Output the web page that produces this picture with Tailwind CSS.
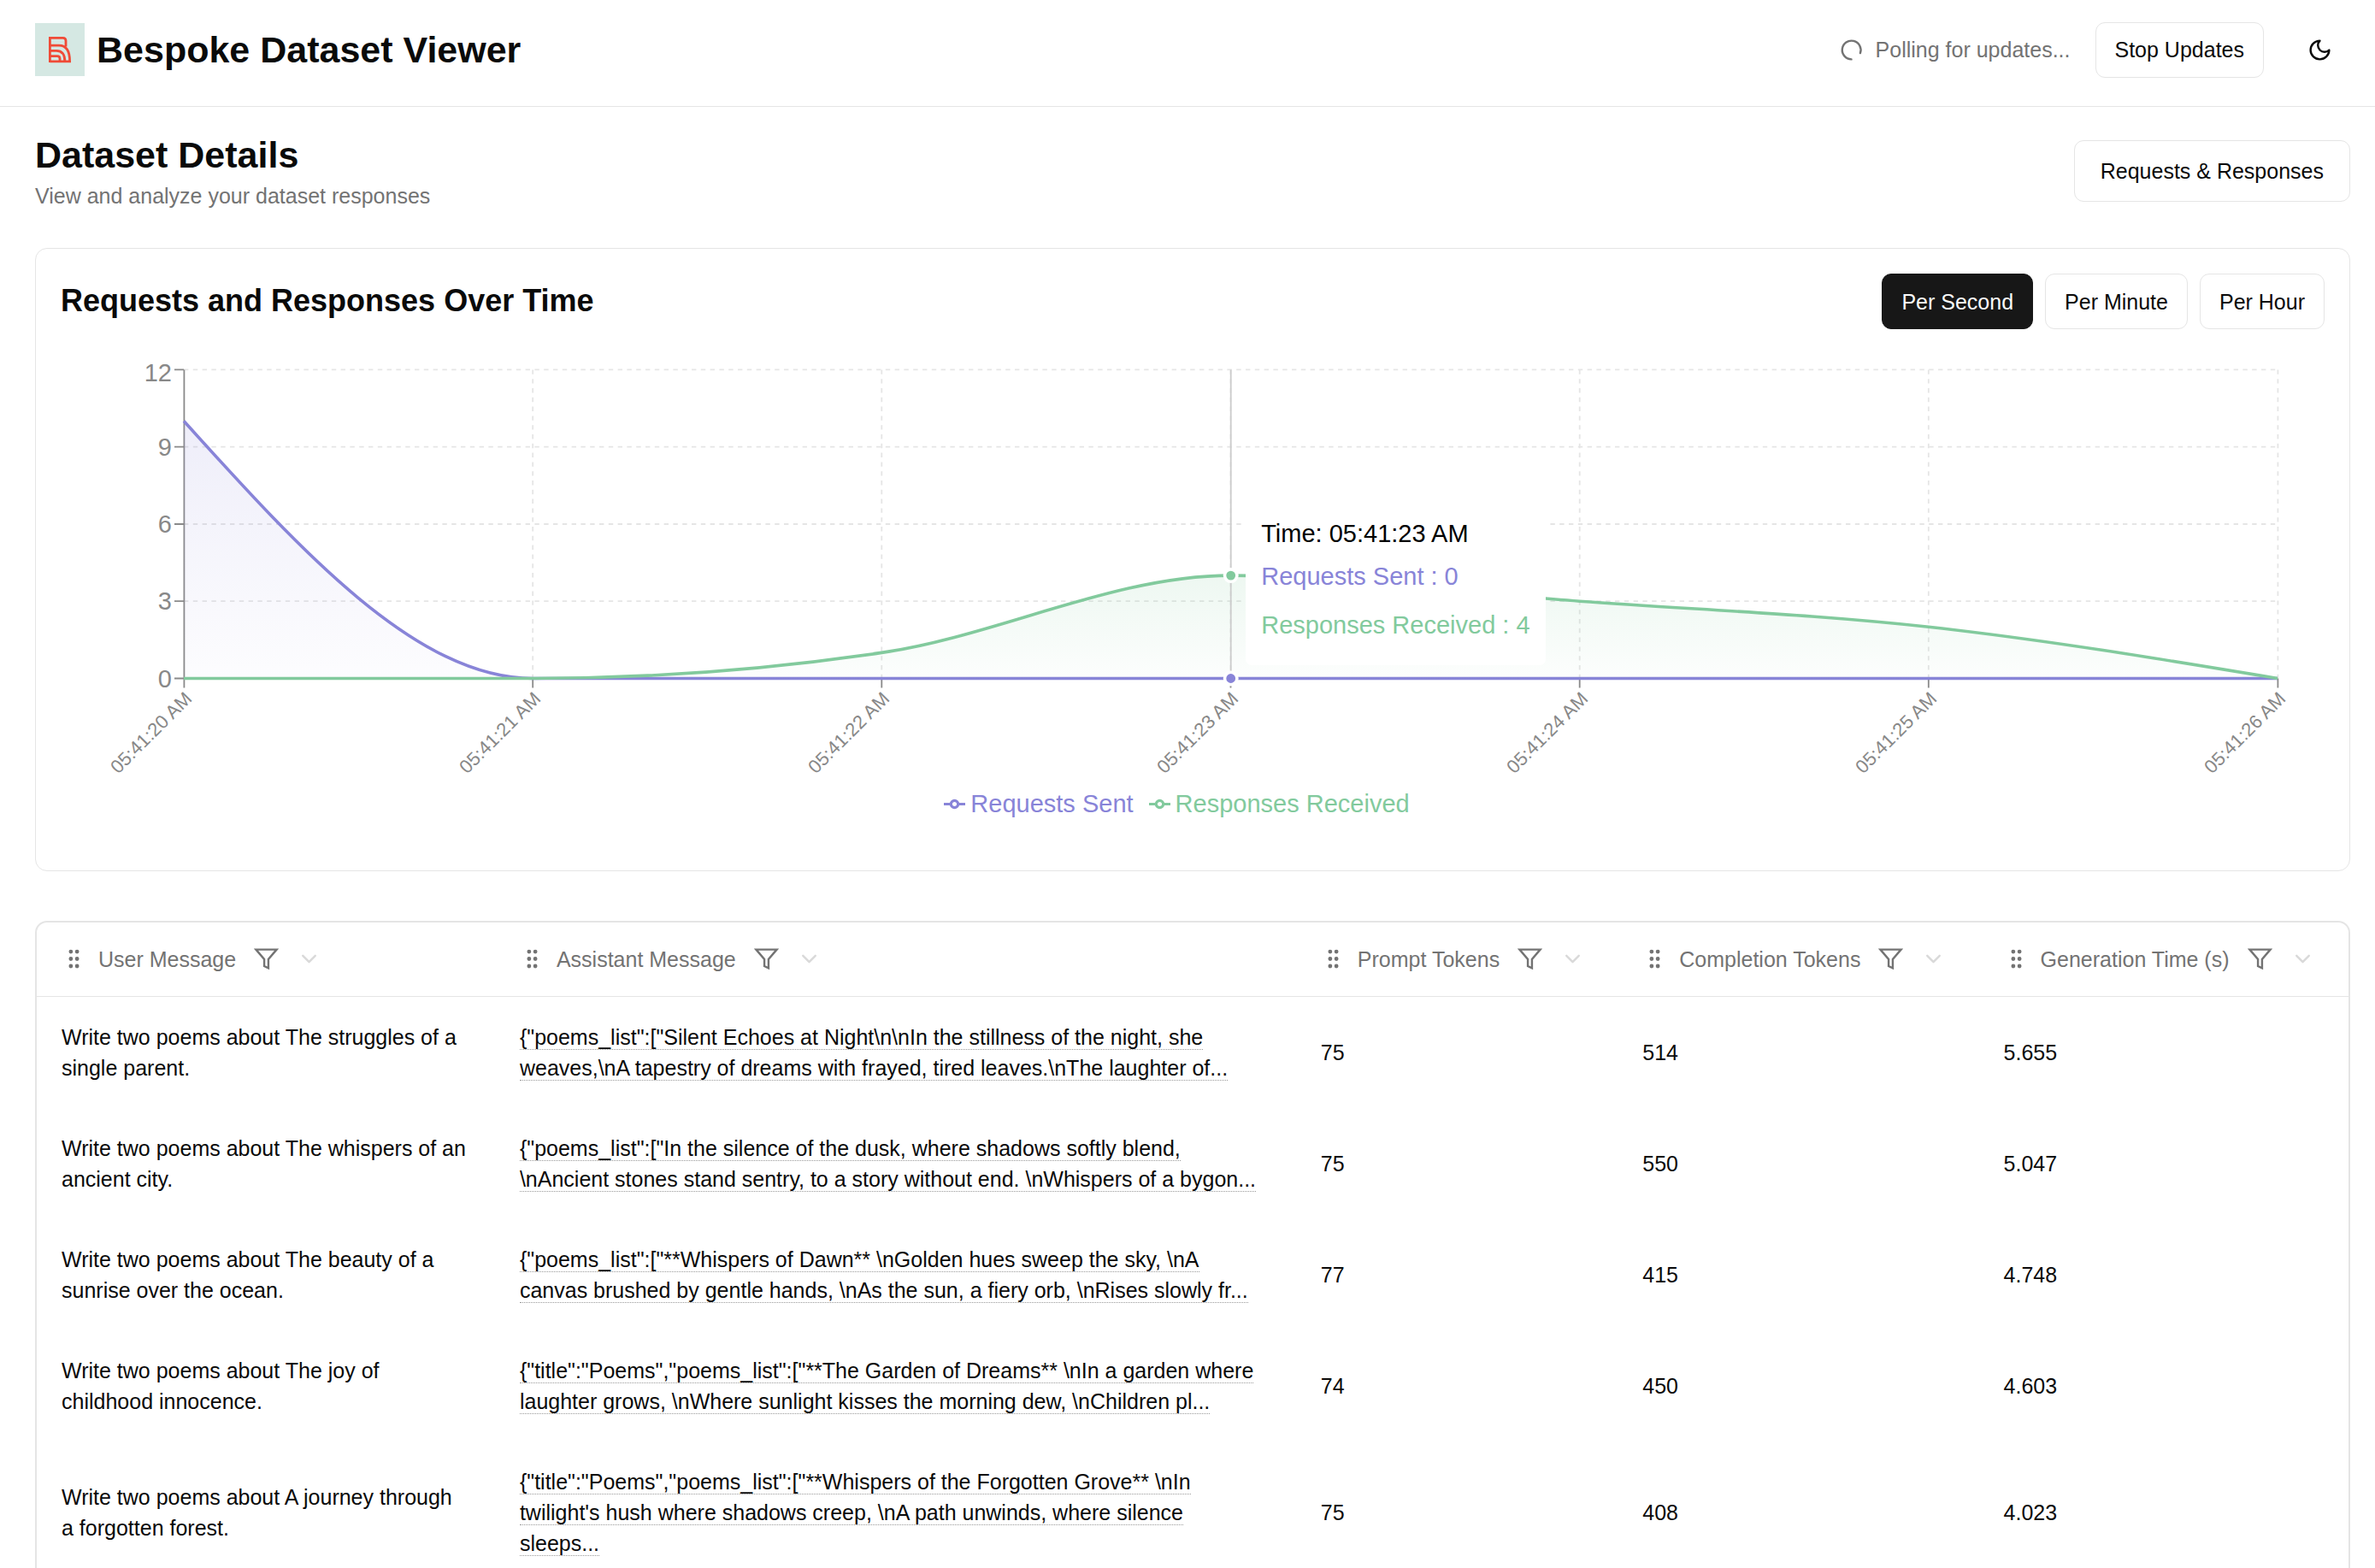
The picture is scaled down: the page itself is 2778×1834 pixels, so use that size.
<!DOCTYPE html>
<html lang="en">
<head>
<meta charset="utf-8">
<meta name="viewport" content="width=device-width, initial-scale=1">
<title>Bespoke Dataset Viewer</title>
<script src="https://cdn.jsdelivr.net/npm/@tailwindcss/browser@4"></script>
</head>
<body class="bg-white text-[#0a0a0a] font-['Liberation_Sans',Arial,sans-serif] text-[25px] leading-[36px] overflow-x-hidden">

<!-- shared icons -->
<svg class="hidden" aria-hidden="true">
  <symbol id="grip" viewBox="0 0 24 24"><g fill="currentColor" stroke="currentColor" stroke-width="2"><circle cx="9" cy="12" r="1"/><circle cx="9" cy="5" r="1"/><circle cx="9" cy="19" r="1"/><circle cx="15" cy="12" r="1"/><circle cx="15" cy="5" r="1"/><circle cx="15" cy="19" r="1"/></g></symbol>
  <symbol id="funnel" viewBox="0 0 24 24"><path d="M22 3H2l8 9.46V19l4 2v-8.54L22 3z" fill="none" stroke="currentColor" stroke-width="2"/></symbol>
  <symbol id="chevron" viewBox="0 0 24 24"><path d="m6 9 6 6 6-6" fill="none" stroke="currentColor" stroke-width="2" stroke-linejoin="round" stroke-linecap="round"/></symbol>
</svg>

<header class="flex items-center justify-between border-b border-[#e5e5e5] pt-[22px] pb-[30px] pl-[41px] pr-[29px]">
  <div class="flex items-center gap-[14px]">
    <svg class="h-[62px] w-[58px] bg-[#d5e8e3]" viewBox="0 0 58 62" fill="none" stroke="#f04b37" stroke-width="2.8" role="img" aria-label="Bespoke logo">
      <path d="M17.4 46V17.4H32.6Q36 17.4 36 20.8V27.5"/>
      <path d="M17.4 26.2H28C36.5 26.2 40.6 33 40.6 44.8H17.4"/>
      <path d="M17.4 32.4H25C31.5 32.4 34.8 37 34.8 44.8"/>
      <path d="M17.4 38.6H26Q29 38.6 29 41.6V44.8"/>
    </svg>
    <span class="text-[43px] leading-[58px] font-bold">Bespoke Dataset Viewer</span>
  </div>
  <div class="flex items-center gap-[29px]">
    <div class="flex items-center gap-[14px] text-[#737373]">
      <svg class="size-[29px]" viewBox="0 0 24 24" fill="none" stroke="currentColor" stroke-width="2" stroke-linecap="round" aria-hidden="true"><path d="M12 21A9 9 0 1 1 20.6 15"/></svg>
      <span>Polling for updates...</span>
    </div>
    <button class="h-[65px] rounded-[11px] border border-[#e5e5e5] px-[22px]">Stop Updates</button>
    <button class="flex size-[72px] items-center justify-center" aria-label="Toggle theme">
      <svg class="size-[29px]" viewBox="0 0 24 24" fill="none" stroke="currentColor" stroke-width="2" stroke-linecap="round" stroke-linejoin="round"><path d="M12 3a6 6 0 0 0 9 9 9 9 0 1 1-9-9Z"/></svg>
    </button>
  </div>
</header>

<main class="pl-[41px] pr-[29px]">
  <div class="flex items-center justify-between pt-[27px]">
    <div>
      <h1 class="text-[43px] leading-[58px] font-bold">Dataset Details</h1>
      <p class="mt-px text-[#737373]">View and analyze your dataset responses</p>
    </div>
    <button class="h-[72px] rounded-[11px] border border-[#e5e5e5] px-[30px]">Requests &amp; Responses</button>
  </div>

  <section class="mt-[43px] rounded-[14px] border border-[#e5e5e5] px-[29px] pt-[29px] pb-[56px]">
    <div class="flex items-center justify-between">
      <h2 class="mb-[2px] text-[36px] leading-[50px] font-bold">Requests and Responses Over Time</h2>
      <div class="flex gap-[14px]">
        <button class="h-[65px] rounded-[11px] border border-[#171717] bg-[#171717] px-[22px] text-[#fafafa]">Per Second</button>
        <button class="h-[65px] rounded-[11px] border border-[#e5e5e5] px-[22px]">Per Minute</button>
        <button class="h-[65px] rounded-[11px] border border-[#e5e5e5] px-[22px]">Per Hour</button>
      </div>
    </div>

    <div class="relative mt-[28px]">
      <svg class="block h-auto w-full" viewBox="0 0 2648 506" role="img" aria-label="Requests and responses per second">
        <defs>
          <linearGradient id="sentFill" x1="0" y1="0" x2="0" y2="1"><stop offset="0" stop-color="#8884d8" stop-opacity=".14"/><stop offset="1" stop-color="#8884d8" stop-opacity=".02"/></linearGradient>
          <linearGradient id="recvFill" x1="0" y1="0" x2="0" y2="1"><stop offset="0" stop-color="#82ca9d" stop-opacity=".14"/><stop offset="1" stop-color="#82ca9d" stop-opacity=".02"/></linearGradient>
        </defs>
        <g stroke="#e5e5e5" stroke-width="1.8" stroke-dasharray="5.4 5.4">
          <path d="M144 19.4H2593M144 109.7H2593M144 200H2593M144 290.2H2593"/>
          <path d="M552.2 19.4V380.5M960.3 19.4V380.5M1368.5 19.4V380.5M1776.7 19.4V380.5M2184.8 19.4V380.5M2593.4 19.4V380.5"/>
        </g>
        <g stroke="#8a8a8a" stroke-width="1.8">
          <path d="M144 380.5H2593M144.4 380.5v11M552.2 380.5v11M960.3 380.5v11M1368.5 380.5v11M1776.7 380.5v11M2184.8 380.5v11M2593.4 380.5v11"/>
          <path d="M144.4 19.4V380.5M133 19.4h11M133 109.7h11M133 200h11M133 290.2h11M133 380.5h11"/>
        </g>
        <g fill="#888888" font-size="29" text-anchor="end">
          <text x="130" y="33">12</text><text x="130" y="120">9</text><text x="130" y="210">6</text><text x="130" y="300">3</text><text x="130" y="391">0</text>
        </g>
        <g fill="#888888" font-size="22" text-anchor="end">
          <text transform="translate(144 395) rotate(-45)" y="15">05:41:20 AM</text>
          <text transform="translate(552 395) rotate(-45)" y="15">05:41:21 AM</text>
          <text transform="translate(960 395) rotate(-45)" y="15">05:41:22 AM</text>
          <text transform="translate(1368 395) rotate(-45)" y="15">05:41:23 AM</text>
          <text transform="translate(1777 395) rotate(-45)" y="15">05:41:24 AM</text>
          <text transform="translate(2185 395) rotate(-45)" y="15">05:41:25 AM</text>
          <text transform="translate(2593 395) rotate(-45)" y="15">05:41:26 AM</text>
        </g>
        <path fill="url(#sentFill)" d="M144 79.5C280.1 230 416.1 380.5 552.2 380.5H144Z"/>
        <path fill="none" stroke="#8884d8" stroke-width="3.6" d="M144 79.5C280.1 230 416.1 380.5 552.2 380.5H2593"/>
        <path fill="url(#recvFill)" d="M552.2 380.5C688.2 380.5 824.3 370.5 960.3 350.4C1096.4 330.3 1232.4 260.1 1368.5 260.1C1504.6 260.1 1640.6 280.2 1776.7 290.2C1912.7 300.2 2048.8 305.3 2184.8 320.3C2320.9 335.4 2456.9 357.9 2593 380.5Z"/>
        <path fill="none" stroke="#82ca9d" stroke-width="3.6" d="M144 380.5H552.2C688.2 380.5 824.3 370.5 960.3 350.4C1096.4 330.3 1232.4 260.1 1368.5 260.1C1504.6 260.1 1640.6 280.2 1776.7 290.2C1912.7 300.2 2048.8 305.3 2184.8 320.3C2320.9 335.4 2456.9 357.9 2593 380.5"/>
        <path stroke="#cccccc" stroke-width="1.8" d="M1368.7 19.4V380.5"/>
        <g stroke="#ffffff" stroke-width="3.6"><circle cx="1368.7" cy="260.1" r="7.2" fill="#82ca9d"/><circle cx="1368.7" cy="380.5" r="7.2" fill="#8884d8"/></g>
      </svg>

      <!-- hover tooltip -->
      <div class="absolute top-[172px] left-[52.35%] rounded-[7px] bg-white px-[18px] py-[18px] text-[29px] leading-[43px] whitespace-nowrap">
        <p class="text-black">Time: 05:41:23 AM</p>
        <ul>
          <li class="py-[7px] text-[#8884d8]">Requests Sent : 0</li>
          <li class="py-[7px] text-[#82ca9d]">Responses Received : 4</li>
        </ul>
      </div>

      <ul class="flex justify-center gap-[18px] pr-[37px] text-[29px] leading-[43px]">
        <li class="flex items-center gap-[6px] text-[#8884d8]">
          <svg class="w-[25px]" viewBox="0 0 32 32" fill="none" stroke="currentColor" stroke-width="4" aria-hidden="true"><path d="M0 16h10.67A5.33 5.33 0 1 1 21.33 16H32M21.33 16A5.33 5.33 0 1 1 10.67 16"/></svg>Requests Sent</li>
        <li class="flex items-center gap-[6px] text-[#82ca9d]">
          <svg class="w-[25px]" viewBox="0 0 32 32" fill="none" stroke="currentColor" stroke-width="4" aria-hidden="true"><path d="M0 16h10.67A5.33 5.33 0 1 1 21.33 16H32M21.33 16A5.33 5.33 0 1 1 10.67 16"/></svg>Responses Received</li>
      </ul>
    </div>
  </section>

  <div class="mt-[58px] overflow-hidden rounded-[14px] border-2 border-[#e5e5e5]">
    <table class="w-full table-fixed text-left">
      <thead class="text-[#737373]">
        <tr class="h-[86px] border-b border-[#e5e5e5]">
          <th class="w-[19.82%] pl-[29px] font-normal"><div class="flex items-center gap-[14px]"><svg class="size-[29px]"><use href="#grip"/></svg>User Message<button class="flex size-[43px] items-center justify-center" aria-label="Filter User Message"><svg class="size-[29px]"><use href="#funnel"/></svg></button><svg class="size-[29px] text-[#d9d9d9]"><use href="#chevron"/></svg></div></th>
          <th class="w-[34.65%] pl-[29px] font-normal"><div class="flex items-center gap-[14px]"><svg class="size-[29px]"><use href="#grip"/></svg>Assistant Message<button class="flex size-[43px] items-center justify-center" aria-label="Filter Assistant Message"><svg class="size-[29px]"><use href="#funnel"/></svg></button><svg class="size-[29px] text-[#d9d9d9]"><use href="#chevron"/></svg></div></th>
          <th class="w-[13.92%] pl-[29px] font-normal"><div class="flex items-center gap-[14px]"><svg class="size-[29px]"><use href="#grip"/></svg>Prompt Tokens<button class="flex size-[43px] items-center justify-center" aria-label="Filter Prompt Tokens"><svg class="size-[29px]"><use href="#funnel"/></svg></button><svg class="size-[29px] text-[#d9d9d9]"><use href="#chevron"/></svg></div></th>
          <th class="w-[15.62%] pl-[29px] font-normal"><div class="flex items-center gap-[14px]"><svg class="size-[29px]"><use href="#grip"/></svg>Completion Tokens<button class="flex size-[43px] items-center justify-center" aria-label="Filter Completion Tokens"><svg class="size-[29px]"><use href="#funnel"/></svg></button><svg class="size-[29px] text-[#d9d9d9]"><use href="#chevron"/></svg></div></th>
          <th class="pl-[29px] font-normal"><div class="flex items-center gap-[14px] whitespace-nowrap"><svg class="size-[29px]"><use href="#grip"/></svg>Generation Time (s)<button class="flex size-[43px] items-center justify-center" aria-label="Filter Generation Time"><svg class="size-[29px]"><use href="#funnel"/></svg></button><svg class="size-[29px] text-[#d9d9d9]"><use href="#chevron"/></svg></div></th>
        </tr>
      </thead>
      <tbody>
        <tr>
          <td class="p-[29px]">Write two poems about The struggles of a single parent.</td>
          <td class="p-[29px]"><span class="border-b border-dotted border-[#999999]">{"poems_list":["Silent Echoes at Night\n\nIn the stillness of the night, she weaves,\nA tapestry of dreams with frayed, tired leaves.\nThe laughter of...</span></td>
          <td class="p-[29px]">75</td>
          <td class="p-[29px]">514</td>
          <td class="p-[29px]">5.655</td>
        </tr>
        <tr>
          <td class="p-[29px]">Write two poems about The whispers of an ancient city.</td>
          <td class="p-[29px]"><span class="border-b border-dotted border-[#999999]">{"poems_list":["In the silence of the dusk, where shadows softly blend, <br>\nAncient stones stand sentry, to a story without end. \nWhispers of a bygon...</span></td>
          <td class="p-[29px]">75</td>
          <td class="p-[29px]">550</td>
          <td class="p-[29px]">5.047</td>
        </tr>
        <tr>
          <td class="p-[29px]">Write two poems about The beauty of a sunrise over the ocean.</td>
          <td class="p-[29px]"><span class="border-b border-dotted border-[#999999]">{"poems_list":["**Whispers of Dawn** \nGolden hues sweep the sky, \nA <br>canvas brushed by gentle hands, \nAs the sun, a fiery orb, \nRises slowly fr...</span></td>
          <td class="p-[29px]">77</td>
          <td class="p-[29px]">415</td>
          <td class="p-[29px]">4.748</td>
        </tr>
        <tr>
          <td class="p-[29px]">Write two poems about The joy of childhood innocence.</td>
          <td class="p-[29px]"><span class="border-b border-dotted border-[#999999]">{"title":"Poems","poems_list":["**The Garden of Dreams** \nIn a garden where laughter grows, \nWhere sunlight kisses the morning dew, \nChildren pl...</span></td>
          <td class="p-[29px]">74</td>
          <td class="p-[29px]">450</td>
          <td class="p-[29px]">4.603</td>
        </tr>
        <tr>
          <td class="p-[29px]">Write two poems about A journey through <br>a forgotten forest.</td>
          <td class="p-[29px]"><span class="border-b border-dotted border-[#999999]">{"title":"Poems","poems_list":["**Whispers of the Forgotten Grove** \nIn twilight's hush where shadows creep, \nA path unwinds, where silence <br>sleeps...</span></td>
          <td class="p-[29px]">75</td>
          <td class="p-[29px]">408</td>
          <td class="p-[29px]">4.023</td>
        </tr>
      </tbody>
    </table>
  </div>
</main>
</body>
</html>
